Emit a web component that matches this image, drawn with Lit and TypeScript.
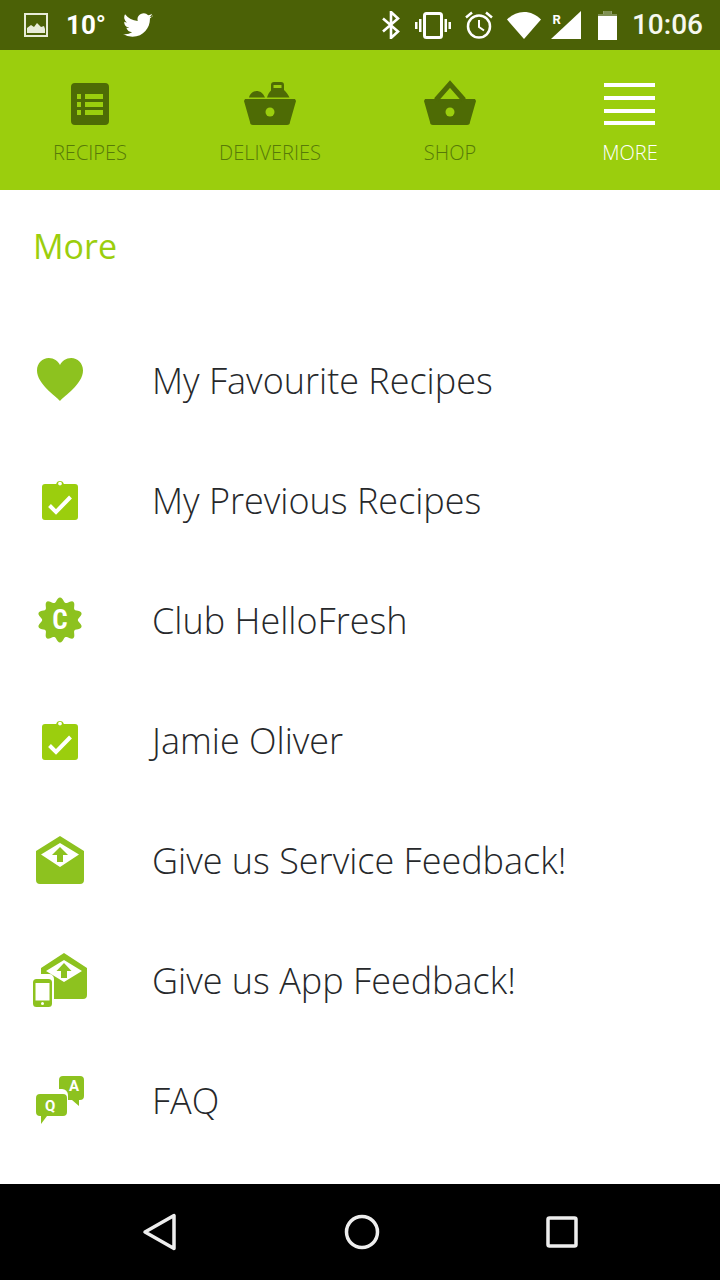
import { LitElement, html, css, svg } from "lit";
import { customElement } from "lit/decorators.js";

const clip = svg`<path fill-rule="evenodd" d="M5 5h11.2a3.9 3.9 0 0 1 7.6 0H35a3 3 0 0 1 3 3v30a3 3 0 0 1-3 3H5a3 3 0 0 1-3-3V8a3 3 0 0 1 3-3zM20 2.7a1.9 1.9 0 1 0 0 3.8a1.9 1.9 0 0 0 0-3.8z"/><path d="M9.5 26.5l6.5 6.5L30.5 18" fill="none" stroke="#fff" stroke-width="4"/>`;

const seal = (() => {
  const n = 10, pts: string[] = [];
  for (let i = 0; i < 120; i++) {
    const a = (i / 120) * Math.PI * 2;
    const r = 20.2 + 2.4 * Math.cos(n * a);
    pts.push(`${(23 + r * Math.sin(a)).toFixed(2)},${(23 - r * Math.cos(a)).toFixed(2)}`);
  }
  return pts.join(" ");
})();

const envelope = svg`<path fill-rule="evenodd" d="M24 0L48 15V44a4 4 0 0 1-4 4H4a4 4 0 0 1-4-4V15zM24 7L5 18.5L24 31L43 18.5z"/><path d="M24 11l8 8h-5v7h-6v-7h-5z"/>`;

const items: [string, unknown, number, number, string][] = [
  ["My Favourite Recipes", svg`<path d="M24 44C20 39 1 27 1 13.5C1 6 6.5 1 12.800 1C18 1 22 4 24 8C26 4 30 1 35.200 1C41.500 1 47 6 47 13.500C47 27 28 39 24 44z" fill="#8dc21f"/>`, 48, 46, "0 0 48 46"],
  ["My Previous Recipes", svg`<g fill="#9bce0d">${clip}</g>`, 40, 43, "0 0 40 43"],
  ["Club HelloFresh", svg`<polygon points="${seal}" fill="#8dc21f"/><text x="23" y="32" text-anchor="middle" class="seal">C</text>`, 46, 46, "0 0 46 46"],
  ["Jamie Oliver", svg`<g fill="#9bce0d">${clip}</g>`, 40, 43, "0 0 40 43"],
  ["Give us Service Feedback!", svg`<g fill="#8dc21f">${envelope}</g>`, 48, 48, "0 0 48 48"],
  ["Give us App Feedback!", svg`<g fill="#8dc21f"><path fill-rule="evenodd" d="M31 0L54 15V42a4 4 0 0 1-4 4H21V26a5 5 0 0 0-5-5H8V15zM31 7L13 18L31 29L49 18z"/><path d="M31 10l7.500 8H34v7h-6v-7h-4.500z"/><path fill-rule="evenodd" d="M3.500 26h12A3.500 3.500 0 0 1 19 29.500V50.500A3.500 3.500 0 0 1 15.500 54h-12A3.500 3.500 0 0 1 0 50.500V29.500A3.500 3.500 0 0 1 3.500 26zM2.500 30v17.500h14V30zM9.500 49a1.500 1.500 0 1 0 0 3a1.500 1.500 0 0 0 0-3z"/></g>`, 54, 54, "0 0 54 54"],
  ["FAQ", svg`<g fill="#8dc21f"><path d="M23 4a4 4 0 0 1 4-4H44a4 4 0 0 1 4 4V20a4 4 0 0 1-4 4H43L43 30L36 24H32V19a6 6 0 0 0-6-6H23z"/><path d="M4 18H27a4 4 0 0 1 4 4V36a4 4 0 0 1-4 4H11L5 48V40H4a4 4 0 0 1-4-4V22a4 4 0 0 1 4-4z"/></g><text x="33" y="15" class="qa">A</text><text x="9" y="35" class="qa">Q</text>`, 48, 48, "0 0 48 48"],
];

@customElement("app-root")
export class AppRoot extends LitElement {
  static styles = css`
    :host { display: flex; flex-direction: column; width: 720px; height: 1280px; background: #fff; font-family: "Open Sans", "Liberation Sans", sans-serif; overflow: hidden; }
    svg { display: block; flex: none; }
    .status { height: 50px; background: #4b6106; display: flex; align-items: center; color: #fff; font-family: Roboto, sans-serif; padding: 0 17px 0 24px; }
    .temp { font-size: 26px; font-weight: 700; margin-left: 18px; line-height: 50px; }
    .spacer { flex: 1; }
    .time { font-size: 28px; font-weight: 500; margin-left: 15px; line-height: 50px; color: #f6f8ee; }
    .tw { margin-left: 17px; }
    .nav { height: 140px; background: #9bce0d; display: flex; }
    .tab { flex: 1; display: flex; flex-direction: column; align-items: center; padding-top: 30px; color: #577a08; }
    .tab.on { color: #fff; }
    .tab span { font-size: 20px; font-weight: 300; line-height: 28px; margin-top: 11px; }
    .title { color: #9bce0d; font-size: 34px; font-weight: 400; line-height: 48px; padding: 32px 0 0 33px; }
    .list { flex: 1; padding-top: 50px; }
    .row { height: 120px; display: flex; align-items: center; }
    .ic { width: 120px; display: flex; justify-content: center; }
    .row span { margin-left: 32px; font-size: 36px; font-weight: 300; color: #26282b; }
    .seal { font: 700 27px "Roboto Condensed", Roboto, sans-serif; fill: #fff; }
    .qa { font: 700 15px Roboto, sans-serif; fill: #fff; }
    .bar { height: 96px; background: #000; display: flex; justify-content: space-between; align-items: center; padding: 0 142px; }
  `;

  render() {
    return html`
      <div class="status">
        <svg width="24" height="24" viewBox="0 0 24 24"><rect x="1" y="1" width="22" height="22" fill="none" stroke="#e8ecd8" stroke-width="2"/><path d="M3 20v-5l4-3 3 2 3-4 4 4 3-1 1 3v4z" fill="#e8ecd8"/></svg>
        <div class="temp">10°</div>
        <svg class="tw" width="30" height="25" viewBox="0 0 24 20"><path fill="#fff" d="M23.950 2.570a9.800 9.800 0 0 1-2.830.780 4.940 4.940 0 0 0 2.170-2.720 9.900 9.900 0 0 1-3.130 1.190 4.930 4.930 0 0 0-8.400 4.490A14 14 0 0 1 1.640.960a4.930 4.930 0 0 0 1.520 6.570 4.900 4.900 0 0 1-2.230-.620v.060a4.930 4.930 0 0 0 3.950 4.830 4.900 4.900 0 0 1-2.210.080 4.940 4.940 0 0 0 4.600 3.420A9.900 9.900 0 0 1 0 16.850a14 14 0 0 0 7.550 2.210c9.050 0 14-7.500 14-14 0-.210 0-.420-.010-.630a10 10 0 0 0 2.410-2.550z"/></svg>
        <div class="spacer"></div>
        <svg width="18" height="28" viewBox="0 0 18 28"><path d="M1 7.500L16 20.500L9 27V1l7 6.500L1 20.500" fill="none" stroke="#fff" stroke-width="2.600"/></svg>
        <svg style="margin-left:15px" width="36" height="27" viewBox="0 0 36 27"><rect x="9.500" y="1.500" width="17" height="24" rx="2" fill="none" stroke="#fff" stroke-width="3"/><path d="M4 7h2.500v13H4zM0 10h2.500v7H0zM29.500 7H32v13h-2.500zM33.500 10H36v7h-2.500z" fill="#fff"/></svg>
        <svg style="margin-left:14px" width="28" height="28" viewBox="0 0 28 28"><circle cx="14" cy="15.500" r="11" fill="none" stroke="#fff" stroke-width="2.500"/><path d="M14 9v7l5 3.500" fill="none" stroke="#fff" stroke-width="2"/><path d="M1 6.500L7 1.500M27 6.500L21 1.500" stroke="#fff" stroke-width="2.500"/></svg>
        <svg style="margin-left:14px" width="34" height="28" viewBox="0 0 34 28"><path d="M17 28L0 8.500C5 3.500 10.500 1 17 1s12 2.500 17 7.500z" fill="#fff"/></svg>
        <svg style="margin-left:10px" width="30" height="28" viewBox="0 0 30 28"><path d="M30 0V28H0z" fill="#fff"/><text x="1.500" y="13" style="font:700 13px Roboto,sans-serif" fill="#fff">R</text></svg>
        <svg style="margin-left:17px" width="19" height="29" viewBox="0 0 19 29"><path d="M5.500 0h8v3H19v26H0V3h5.500z" fill="#fff"/><path d="M5.500 0h8v3H19v2H0V3h5.500z" fill="#7f9053"/></svg>
        <div class="time">10:06</div>
      </div>
      <div class="nav">
        <div class="tab">
          <svg width="60" height="48" viewBox="0 0 60 48"><path fill="#4e6b05" fill-rule="evenodd" d="M15 3h30a4 4 0 0 1 4 4v34a4 4 0 0 1-4 4H15a4 4 0 0 1-4-4V7a4 4 0 0 1 4-4zM17 14v5h4v-5zM25 14v5h18v-5zM17 22v5h4v-5zM25 22v5h18v-5zM17 30v5h4v-5zM25 30v5h18v-5z"/></svg>
          <span>RECIPES</span>
        </div>
        <div class="tab">
          <svg width="60" height="48" viewBox="0 0 60 48"><path fill="#4e6b05" d="M5 19H55L56 21L50 42a3 3 0 0 1-3 3H13a3 3 0 0 1-3-3L4 21zM9 17.500C10 13 14 11 16.500 11C20 11 23 13 25 17.500zM27 17.500C28 14 29.500 12 31 10.500V5a3 3 0 0 1 3-3h7a3 3 0 0 1 3 3V10c2 2 4 4 5.500 7.500z"/><rect x="33.500" y="5" width="8" height="3" fill="#9bce0d"/><circle cx="30" cy="32" r="4.500" fill="#9bce0d"/></svg>
          <span>DELIVERIES</span>
        </div>
        <div class="tab">
          <svg width="60" height="48" viewBox="0 0 60 48"><path fill="#4e6b05" d="M5 19H55L56 21L50 42a3 3 0 0 1-3 3H13a3 3 0 0 1-3-3L4 21z"/><path d="M16 20L30 4L44 20" fill="none" stroke="#4e6b05" stroke-width="5"/><circle cx="30" cy="32" r="4.500" fill="#9bce0d"/></svg>
          <span>SHOP</span>
        </div>
        <div class="tab on">
          <svg width="60" height="48" viewBox="0 0 60 48"><path fill="#fff" d="M4 3h51v4H4zM4 16h51v4H4zM4 29h51v4H4zM4 41h51v4H4z"/></svg>
          <span>MORE</span>
        </div>
      </div>
      <div class="title">More</div>
      <div class="list">
        ${items.map(([label, icon, w, h, vb]) => html`
          <div class="row">
            <div class="ic"><svg width=${w} height=${h} viewBox=${vb}>${icon}</svg></div>
            <span>${label}</span>
          </div>`)}
      </div>
      <div class="bar">
        <svg width="36" height="38" viewBox="0 0 36 38"><path d="M3 19L32 2.500V35.500z" fill="none" stroke="#eee" stroke-width="3.500" stroke-linejoin="round"/></svg>
        <svg width="36" height="36" viewBox="0 0 36 36"><circle cx="18" cy="18" r="15.500" fill="none" stroke="#eee" stroke-width="3.500"/></svg>
        <svg width="32" height="32" viewBox="0 0 32 32"><rect x="2" y="2" width="28" height="28" rx="1.500" fill="none" stroke="#eee" stroke-width="3.500"/></svg>
      </div>
    `;
  }
}
